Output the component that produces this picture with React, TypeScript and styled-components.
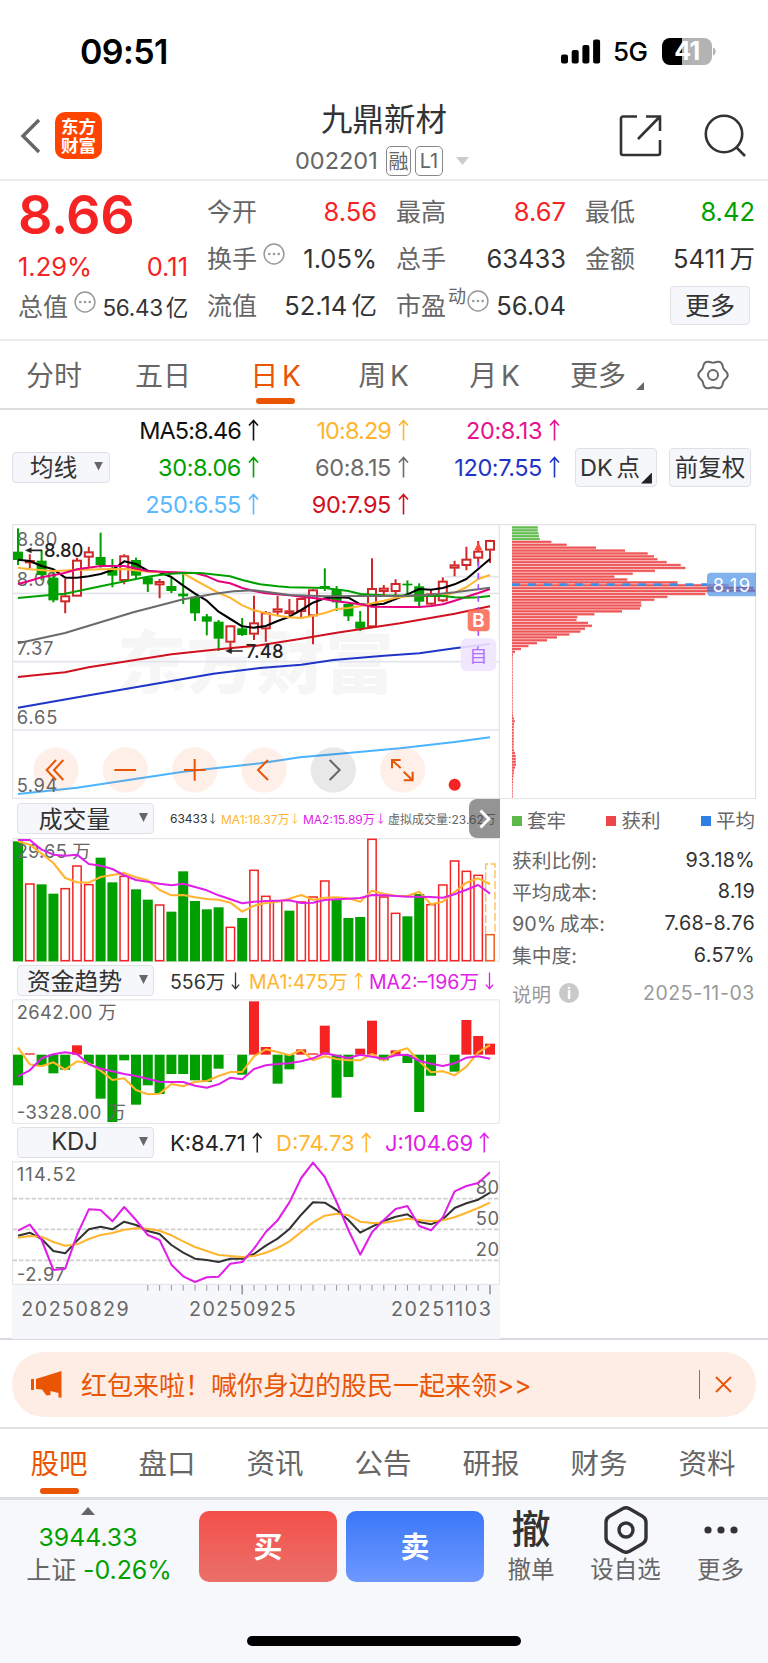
import styled, { createGlobalStyle } from "styled-components";

const FONT = `Inter, "Noto Sans CJK SC", sans-serif`;

const RED = "#f52323";
const GREEN = "#00a000";
const ORANGE = "#ea5504";
const YELLOW = "#ffb52e";
const PURPLE = "#e020e8";

// chart units are a third of a pixel
const candleX = (i: number) => 54 + 35.4 * i;

const toPath = (ys: number[]) =>
  ys.map((y, i) => `${candleX(i).toFixed(1)},${y}`).join(" ");

// six soft teeth around the settings icon
const gearPoints = Array.from({ length: 72 }, (_, i) => {
  const a = (i * 5 * Math.PI) / 180;
  const r = 13.5 + 1.2 * Math.cos(6 * a);
  return `${(16 + r * Math.cos(a)).toFixed(2)},${(16 + r * Math.sin(a)).toFixed(2)}`;
}).join(" ");

// [up, high, top, bottom, low]
const candles: [number, number, number, number, number][] = [
  [0, 40, 110, 135, 150],
  [1, 118, 136, 144, 160],
  [0, 105, 137, 180, 196],
  [0, 172, 188, 256, 262],
  [1, 192, 242, 261, 295],
  [1, 128, 135, 244, 244],
  [1, 95, 110, 127, 155],
  [0, 53, 126, 150, 158],
  [0, 132, 160, 182, 217],
  [1, 118, 122, 197, 208],
  [0, 128, 135, 182, 192],
  [0, 185, 187, 208, 231],
  [1, 192, 199, 210, 250],
  [0, 188, 213, 228, 234],
  [0, 177, 236, 244, 267],
  [0, 242, 245, 295, 318],
  [0, 297, 304, 320, 361],
  [0, 315, 320, 371, 408],
  [1, 331, 332, 382, 400],
  [0, 309, 340, 360, 363],
  [1, 242, 323, 358, 375],
  [1, 288, 293, 342, 380],
  [1, 242, 281, 292, 300],
  [1, 252, 287, 296, 302],
  [1, 248, 250, 290, 308],
  [1, 222, 224, 303, 388],
  [0, 160, 213, 222, 228],
  [0, 213, 222, 262, 288],
  [0, 265, 267, 304, 318],
  [0, 288, 320, 341, 348],
  [1, 130, 220, 336, 338],
  [1, 210, 219, 230, 240],
  [1, 193, 205, 230, 240],
  [0, 196, 206, 211, 236],
  [0, 205, 214, 260, 274],
  [1, 225, 236, 268, 270],
  [1, 187, 198, 258, 262],
  [1, 137, 149, 160, 184],
  [1, 95, 132, 152, 166],
  [1, 78, 108, 130, 150],
  [1, 74, 76, 106, 144],
];

const averages = [
  {
    color: "#4ab4ff",
    points:
      "54,837 231,818 400,793 550,770 780,745 900,727 1010,717 1200,700 1364,681 1470,667",
  },
  {
    color: "#1f35c8",
    points:
      "54,578 250,544 450,509 640,476 780,459 904,449 1000,435 1152,422 1258,415 1364,400 1470,387",
  },
  {
    color: "#d0111f",
    points:
      "54,486 89,482 195,472 266,457 372,440 515,418 656,403 780,391 904,371 1010,353 1200,325 1364,296 1470,274",
  },
  {
    color: "#000",
    points: toPath([
      134, 138, 153, 163, 188, 188, 184, 177, 165, 139, 147, 167, 172, 186, 212,
      236, 257, 290, 312, 334, 338, 333, 318, 305, 285, 263, 250, 247, 248, 268,
      270, 266, 252, 238, 222, 224, 219, 208, 192, 162, 132,
    ]),
  },
  {
    color: YELLOW,
    points:
      "54,158 89,163 160,168 231,165 302,163 372,162 443,170 500,172 550,175 585,195 621,215 656,234 690,248 727,271 762,286 797,294 833,302 868,307 904,309 939,302 975,294 1010,282 1045,279 1081,273 1116,265 1152,257 1187,248 1223,244 1258,243 1329,241 1364,233 1400,216 1435,192 1470,180",
  },
  {
    color: "#e6007e",
    points:
      "54,207 80,200 125,187 190,175 231,163 302,153 372,153 443,168 500,171 585,174 621,184 656,199 690,205 727,219 762,228 797,235 868,241 939,249 975,253 1010,259 1045,263 1081,268 1116,275 1200,276 1258,276 1294,273 1329,268 1364,257 1400,245 1435,234 1470,222",
  },
  {
    color: GREEN,
    points:
      "54,249 125,242 195,236 302,214 408,192 443,185 479,180 515,176 550,174 600,174 650,179 690,184 727,195 780,208 833,214 868,217 975,219 1045,228 1081,237 1150,241 1294,243 1329,243 1364,247 1400,248 1435,247 1470,243",
  },
  {
    color: "#6b6b6b",
    points:
      "54,385 195,354 400,292 550,253 640,237 700,229 762,226 797,230 868,240 975,244 1081,243 1200,243 1294,239 1364,232 1470,218",
  },
];

const volumes = [
  138, 265, 267, 295, 279, 211, 267, 187, 261, 242, 282, 313, 328, 349, 228, 317,
  342, 336, 395, 368, 224, 302, 317, 346, 319, 304, 256, 313, 368, 365, 131, 304,
  353, 363, 296, 327, 268, 196, 227, 239, 417,
];
const volumeDown = [
  0, 2, 3, 7, 8, 10, 11, 13, 14, 15, 16, 17, 19, 23, 27, 28, 29, 33, 34,
];
const volumeMa1 = [
  138, 148, 175, 203, 248, 261, 262, 245, 239, 233, 246, 255, 284, 300, 299, 306,
  311, 313, 322, 349, 331, 323, 319, 310, 299, 313, 307, 306, 309, 319, 286, 295,
  301, 302, 289, 327, 319, 290, 262, 249, 266,
];
const volumeMa2 = [
  134, 134, 163, 178, 181, 178, 206, 211, 221, 240, 254, 259, 265, 270, 265, 275,
  285, 300, 312, 324, 319, 317, 316, 315, 323, 322, 314, 312, 310, 308, 299, 300,
  302, 304, 304, 305, 307, 297, 283, 269, 295,
];

const funds = [
  870, 774, 810, 834, 823, 750, 806, 910, 980, 795, 928, 870, 896, 836, 836, 855,
  860, 820, 776, 838, 618, 755, 865, 822, 762, 774, 691, 907, 845, 760, 676, 795,
  765, 803, 950, 841, 776, 829, 674, 722, 745,
];
const fundMa1 = [
  757, 807, 813, 801, 823, 798, 804, 826, 854, 849, 884, 897, 895, 866, 873, 859,
  857, 842, 830, 830, 783, 762, 770, 780, 764, 795, 783, 791, 795, 795, 776, 796,
  769, 759, 797, 831, 828, 840, 814, 771, 749,
];
const fundMa2 = [
  843, 825, 789, 777, 771, 776, 807, 820, 828, 836, 842, 850, 859, 860, 860, 871,
  877, 867, 847, 852, 821, 810, 806, 804, 798, 789, 773, 781, 788, 778, 784, 790,
  780, 778, 797, 805, 812, 804, 787, 783, 790,
];

const kLine = [
  347, 338, 357, 393, 400, 362, 328, 320, 328, 305, 315, 333, 342, 375, 398, 416,
  420, 426, 416, 416, 402, 377, 356, 327, 284, 247, 248, 270, 300, 338, 320, 303,
  290, 283, 306, 313, 298, 264, 250, 239, 218,
];
const dLine = [
  353, 348, 350, 366, 377, 373, 357, 345, 339, 329, 325, 326, 332, 346, 364, 381,
  393, 405, 408, 411, 408, 398, 384, 364, 336, 307, 287, 281, 286, 305, 309, 308,
  303, 296, 300, 304, 301, 292, 278, 264, 248,
];
const jLine = [
  332, 314, 360, 450, 446, 345, 268, 270, 304, 261, 300, 345, 360, 434, 469, 486,
  472, 470, 431, 426, 386, 336, 301, 247, 174, 128, 171, 246, 330, 404, 337, 300,
  267, 258, 318, 331, 292, 214, 198, 189, 157,
];

const chips = [
  77, 77, 79, 81, 83, 118, 164, 252, 339, 407, 426, 436, 464, 506, 520, 429, 362,
  307, 346, 496, 650, 724, 729, 580, 466, 427, 387, 388, 384, 330, 247, 196, 193,
  228, 240, 219, 205, 172, 135, 105, 75, 49, 27, 9, 3, 2, 2, 2, 2, 2, 2, 2, 2, 2,
  2, 2, 2, 2, 2, 2, 2, 2, 2, 2, 2, 3, 6, 8, 6, 5, 5, 5, 5, 5, 5, 5, 4, 6, 9, 11,
  11, 11, 12, 9, 6, 5, 4, 3, 3, 2, 2, 2, 2, 2,
];

const maRows = [
  [
    { text: "MA5:8.46", color: "#111", tight: true },
    { text: "10:8.29", color: YELLOW, tight: true },
    { text: "20:8.13", color: "#e6148c" },
  ],
  [
    { text: "30:8.06", color: GREEN },
    { text: "60:8.15", color: "#6b6b6b" },
    { text: "120:7.55", color: "#1f35c8" },
  ],
  [
    { text: "250:6.55", color: "#5ab8ff" },
    { text: "90:7.95", color: "#d0111f" },
  ],
];

const stats = [
  ["获利比例:", "93.18%"],
  ["平均成本:", "8.19"],
  ["90% 成本:", "7.68-8.76"],
  ["集中度:", "6.57%"],
];

const bottomTabs = ["股吧", "盘口", "资讯", "公告", "研报", "财务", "资料"];

interface ArrowProps {
  down?: boolean;
  size?: number;
}

const Arrow = ({ down, size = 22 }: ArrowProps) => (
  <svg
    width={size / 2}
    height={size}
    viewBox="0 0 11 22"
    fill="none"
    stroke="currentColor"
    strokeWidth="1.6"
  >
    <path d={down ? "M5.5 0.5V21M1 15.5l4.5 5 4.5-5" : "M5.5 21.5V1M1 6.5l4.5-5 4.5 5"} />
  </svg>
);

const Dots = () => (
  <DotsIcon viewBox="0 0 22 22" fill="#999">
    <circle cx="11" cy="11" r="9.9" fill="none" stroke="#999" strokeWidth="1.5" />
    <circle cx="6.3" cy="11" r="1.3" />
    <circle cx="11" cy="11" r="1.3" />
    <circle cx="15.7" cy="11" r="1.3" />
  </DotsIcon>
);

interface LabelProps {
  x: number;
  y: number;
  width: number;
  children: string;
  color?: string;
  size?: number;
  weight?: number;
}

const Label = ({
  x,
  y,
  width,
  children,
  color = "#666",
  size = 55,
  weight = 400,
}: LabelProps) => (
  <text
    x={x}
    y={y}
    textLength={width}
    fill={color}
    fontSize={size}
    fontWeight={weight}
    fontFamily={FONT}
  >
    {children}
  </text>
);

const Line = ({ points, color }: { points: string; color: string }) => (
  <polyline points={points} fill="none" stroke={color} strokeWidth="6.2" strokeLinejoin="round" />
);

const CandleChart = () => (
  <svg width="500" height="275" viewBox="0 27 1500 825">
    <g fill="#f6f6f7" fontFamily={FONT} fontWeight="900" fontSize="206">
      <text x="352" y="520" textLength="830">
        东方财富
      </text>
    </g>
    <g stroke="#e3e5ec" strokeWidth="5">
      <path d="M38 235H1498M38 440H1498M38 645H1498M1335 185H1498" />
    </g>
    <path d="M38 28.5H1498M38 850H1498" stroke="#e3e3e5" strokeWidth="4" />
    <path d="M38 27V852M1498 27V852" stroke="#dfdfe3" strokeWidth="3" />
    <Label x={50} y={92} width={122}>8.80</Label>
    <Label x={50} y={213} width={122}>8.08</Label>
    <Label x={50} y={420} width={110}>7.37</Label>
    <Label x={50} y={626} width={122}>6.65</Label>
    {candles.map(([up, high, top, bottom, low], i) => {
      const x = candleX(i);
      return up ? (
        <g key={i} stroke="#d02828" strokeWidth="6" fill="#fff">
          <path d={`M${x} ${high}V${top}M${x} ${bottom}V${low}`} />
          <rect x={x - 12} y={top + 2} width="24" height={Math.max(bottom - top - 4, 2)} />
        </g>
      ) : (
        <g key={i} fill={GREEN}>
          <rect x={x - 3} y={high} width="6" height={low - high} />
          <rect x={x - 15} y={top} width="30" height={bottom - top} />
        </g>
      );
    })}
    {averages.map((item) => (
      <Line key={item.color} {...item} />
    ))}
    <g stroke="#222" strokeWidth="5" fill="#222">
      <path d="M84 106H126M686 408H728" />
      <path d="M76 106l18-8v16zM677 408l18-8v16z" strokeWidth="1" />
    </g>
    <Label x={132} y={125} width={118} color="#222" weight={500}>8.80</Label>
    <Label x={737} y={428} width={114} color="#222" weight={500}>7.48</Label>
    <path d="M1435 140V370" stroke="#a64dff" strokeWidth="5" strokeDasharray="18 16" />
    <path d="M1435 82l12 24h-24z" fill="#fb4a35" />
    <rect x="1403" y="283" width="66" height="66" rx="12" fill="#fb6a55" fillOpacity="0.88" />
    <Label x={1416} y={337} width={41} color="#fff" size={58} weight={600}>B</Label>
    <rect x="1382" y="370" width="107" height="98" rx="18" fill="#f0e4fe" fillOpacity="0.9" />
    <Label x={1408} y={441} width={54} color="#b070ff" size={54}>自</Label>
    {[168, 376, 584, 792, 1000, 1208].map((x) => (
      <circle key={x} cx={x} cy="765" r="68" fill={x === 1000 ? "#000" : "#fa6a1e"} fillOpacity={x === 1000 ? 0.09 : 0.1} />
    ))}
    <Label x={50} y={832} width={122}>5.94</Label>
    <g fill="none" stroke={ORANGE} strokeWidth="6">
      <path d="M168 735l-28 30 28 30M190 735l-28 30 28 30" />
      <path d="M343 765H408M552 765H617M584 732V797" />
      <path d="M804 735l-30 30 30 30" />
      <path d="M1176 760V735h26M1178 737l24 22M1238 770v26h-27M1236 794l-25-24" />
    </g>
    <path d="M989 735l30 30-30 30" fill="none" stroke="#666" strokeWidth="6" />
    <circle cx="1364" cy="809" r="18" fill={RED} />
  </svg>
);

const ChipChart = () => (
  <svg width="268" height="275" viewBox="0 27 804 825">
    {chips.map((width, i) => {
      const y = 33 + i * 8.68;
      const green = i < 5;
      return (
        <g key={i}>
          <rect x="36" y={y} width={width} height="8.68" fill={green ? "#b4deab" : "#f7b0b0"} />
          <rect x="36" y={y + 1.5} width={width} height="5.5" fill={green ? "#62bd50" : "#ee5557"} />
        </g>
      );
    })}
    <path d="M36 209H621" stroke="#3c8ce8" strokeWidth="8" strokeDasharray="24 23.3" />
    <path d="M0 28.5H767M0 851H767" stroke="#e3e3e5" strokeWidth="4" />
    <path d="M767 27V852" stroke="#dcdce4" strokeWidth="3" />
    <path d="M621 185a12 12 0 0 1 12-12H768V244H633a12 12 0 0 1-12-12z" fill="#5a9ae8" fillOpacity="0.76" />
    <path d="M621 218H760M621 226H765" stroke="#6a5ca0" strokeWidth="5" strokeOpacity="0.7" />
    <Label x={638} y={230} width={112} color="#fff">8.19</Label>
  </svg>
);

const VolumeChart = () => (
  <svg width="500" height="124" viewBox="0 128 1500 372">
    <path d="M38 130H1498V498H38z" fill="none" stroke="#e3e3e8" strokeWidth="3" />
    {volumes.map((y, i) => {
      const x = candleX(i);
      if (volumeDown.includes(i)) {
        return <rect key={i} x={x - 15} y={y} width="30" height={498 - y} fill={GREEN} />;
      }
      return (
        <rect
          key={i}
          x={x - 12.5}
          y={y + 1}
          width="25"
          height={495 - y}
          fill="#fff"
          stroke={i === 40 ? "#f05a1e" : RED}
          strokeWidth="4.5"
        />
      );
    })}
    <path d="M1457 415V206H1485V415" fill="none" stroke="#ffbe50" strokeWidth="4" strokeDasharray="24 8" />
    <Label x={50} y={187} width={222}>29.65 万</Label>
    <Line points={toPath(volumeMa1)} color={YELLOW} />
    <Line points={toPath(volumeMa2)} color={PURPLE} />
  </svg>
);

const FundChart = () => (
  <svg width="500" height="125" viewBox="0 611 1500 375">
    <path d="M38 613.5H1498V984H38z" fill="none" stroke="#e3e3e8" strokeWidth="3" />
    {funds.map((y, i) => (
      <rect
        key={i}
        x={candleX(i) - 15}
        y={Math.min(y, 778)}
        width="30"
        height={Math.abs(778 - y)}
        fill={y > 778 ? GREEN : y === 776 ? "#fbd5d5" : RED}
      />
    ))}
    <Label x={50} y={672} width={300}>2642.00 万</Label>
    <Label x={50} y={970} width={328}>-3328.00 万</Label>
    <Line points={toPath(fundMa1)} color={YELLOW} />
    <Line points={toPath(fundMa2)} color={PURPLE} />
  </svg>
);

const KdjChart = () => (
  <svg width="500" height="178" viewBox="0 123 1500 534">
    <rect x="36" y="493" width="1464" height="164" fill="#f6f7fa" />
    <path d="M38 125.5H1498V493H38z" fill="#fff" stroke="#e0e0e6" strokeWidth="3" />
    <path d="M38 236H1498M38 328H1498M38 421H1498" stroke="#cfcfcf" strokeWidth="5" strokeDasharray="13 6" />
    <Label x={50} y={184} width={178}>114.52</Label>
    <Label x={50} y={482} width={145}>-2.97</Label>
    <Label x={1427} y={222} width={70}>80</Label>
    <Label x={1427} y={315} width={70}>50</Label>
    <Label x={1427} y={408} width={70}>20</Label>
    <Line points={toPath(kLine)} color="#333" />
    <Line points={toPath(dLine)} color={YELLOW} />
    <Line points={toPath(jLine)} color={PURPLE} />
    {kLine.map((_, i) =>
      i < 11 ? null : (
        <path
          key={i}
          d={`M${candleX(i)} 495V${i === 19 || i === 40 ? 523 : 512}`}
          stroke="#999"
          strokeWidth={i === 19 || i === 40 ? 5 : 3}
        />
      ),
    )}
    <Label x={64} y={587} width={322} size={59}>20250829</Label>
    <Label x={567} y={587} width={320} size={59}>20250925</Label>
    <Label x={1173} y={587} width={300} size={59}>20251103</Label>
  </svg>
);

const App = () => {
  return (
    <Page>
      <GlobalStyle />
      <StatusBar>
        <Clock>09:51</Clock>
        <Signals>
          <svg width="40" height="25" viewBox="0 0 40 25">
            <rect x="0" y="15.5" width="7" height="9" rx="2" />
            <rect x="10.7" y="11" width="7" height="13.5" rx="2" />
            <rect x="21.4" y="6" width="7" height="18.5" rx="2" />
            <rect x="32.1" y="0.5" width="7" height="24" rx="2" />
          </svg>
          <Network>5G</Network>
          <Battery>41</Battery>
          <svg width="4" height="9" viewBox="0 0 4 9">
            <path d="M1 0.5c3.5 1 3.5 7 0 8z" fill="#b3b3b3" />
          </svg>
        </Signals>
      </StatusBar>

      <Header>
        <HeaderSide>
          <svg width="21" height="36" viewBox="0 0 21 36" fill="none" stroke="#666" strokeWidth="3.4">
            <path d="M19 2L3 18l16 16" />
          </svg>
          <Logo>
            <span>东方</span>
            <span>财富</span>
          </Logo>
        </HeaderSide>
        <HeaderTitle>
          <Name>九鼎新材</Name>
          <Code>
            <CodeText>002201</CodeText>
            <Badge $width={25}>融</Badge>
            <Badge $width={28}>L1</Badge>
            <Triangle $dir="down" $size={13} $color="#ccc" />
          </Code>
        </HeaderTitle>
        <HeaderSide $end>
          <svg width="43" height="43" viewBox="0 0 43 43" fill="none" stroke="#333" strokeWidth="2.6">
            <path d="M18 2.5H4a2 2 0 0 0-2 2V39a2 2 0 0 0 2 2H39a2 2 0 0 0 2-2V26M27 2.5H41V17M40 3.5L19 25" />
          </svg>
          <svg width="44" height="43" viewBox="0 0 44 43" fill="none" stroke="#333" strokeWidth="2.6">
            <circle cx="21" cy="20" r="18.2" />
            <path d="M33.5 33.5L42 42" />
          </svg>
        </HeaderSide>
      </Header>

      <Quote>
        <PriceBlock>
          <Price>8.66</Price>
          <Change>
            <span>1.29%</span>
            <span>0.11</span>
          </Change>
          <Cell>
            <CellName>
              总值
              <Dots />
            </CellName>
            <CellValue $small>56.43 亿</CellValue>
          </Cell>
        </PriceBlock>
        <QuoteGrid>
          <Cell>
            <CellName>今开</CellName>
            <CellValue $color={RED}>8.56</CellValue>
          </Cell>
          <Cell>
            <CellName>最高</CellName>
            <CellValue $color={RED}>8.67</CellValue>
          </Cell>
          <Cell>
            <CellName>最低</CellName>
            <CellValue $color={GREEN}>8.42</CellValue>
          </Cell>
          <Cell>
            <CellName>
              换手
              <Dots />
            </CellName>
            <CellValue>1.05%</CellValue>
          </Cell>
          <Cell>
            <CellName>总手</CellName>
            <CellValue>63433</CellValue>
          </Cell>
          <Cell>
            <CellName>金额</CellName>
            <CellValue>5411 万</CellValue>
          </Cell>
          <Cell>
            <CellName>流值</CellName>
            <CellValue>52.14 亿</CellValue>
          </Cell>
          <Cell>
            <CellName>
              市盈<Sup>动</Sup>
              <Dots />
            </CellName>
            <CellValue>56.04</CellValue>
          </Cell>
          <Cell $end>
            <MoreBtn>更多</MoreBtn>
          </Cell>
        </QuoteGrid>
      </Quote>

      <PeriodTabs>
        <Period>分时</Period>
        <Period>五日</Period>
        <Period $active>日 K</Period>
        <Period>周 K</Period>
        <Period>月 K</Period>
        <Period>
          更多
          <Corner $size={8} />
        </Period>
        <Period>
          <svg width="32" height="32" viewBox="0 0 32 32" fill="none" stroke="#666" strokeWidth="2">
            <polygon points={gearPoints} strokeLinejoin="round" />
            <circle cx="16" cy="16" r="5" />
          </svg>
        </Period>
      </PeriodTabs>

      <MaPanel>
        <MaSelect>
          均线
          <Triangle $dir="down" $size={9} $color="#666" />
        </MaSelect>
        <MaList>
          {maRows.flat().map(({ text, color, tight }) => (
            <MaItem key={text} $color={color} $tight={tight}>
              {text}
              <Arrow />
            </MaItem>
          ))}
        </MaList>
        <ToolBtn>
          DK 点
          <Corner $size={11} $dark />
        </ToolBtn>
        <ToolBtn>前复权</ToolBtn>
      </MaPanel>

      <Charts>
        <Left>
          <CandleChart />
          <IndicatorBar $height={39}>
            <IndicatorSelect>
              成交量
              <Triangle $dir="down" $size={9} $color="#666" />
            </IndicatorSelect>
            <Tiny $color="#333" $width={51}>
              63433
              <Arrow down size={11} />
            </Tiny>
            <Tiny $color={YELLOW} $width={82}>
              MA1:18.37万
              <Arrow down size={11} />
            </Tiny>
            <Tiny $color={PURPLE} $width={85}>
              MA2:15.89万
              <Arrow down size={11} />
            </Tiny>
            <Tiny $color="#666" $width={110}>
              虚拟成交量:23.62万
            </Tiny>
            <NextBtn>
              <svg width="12" height="20" viewBox="0 0 12 20" fill="none" stroke="#fff" strokeWidth="3">
                <path d="M1.5 1.5L10 10l-8.5 8.5" />
              </svg>
            </NextBtn>
          </IndicatorBar>
          <VolumeChart />
          <IndicatorBar $height={37}>
            <IndicatorSelect>
              资金趋势
              <Triangle $dir="down" $size={9} $color="#666" />
            </IndicatorSelect>
            <Reading $color="#333" $width={79} $size={19.5}>
              556万
              <Arrow down size={18} />
            </Reading>
            <Reading $color={YELLOW} $width={120} $size={19.5}>
              MA1:475万
              <Arrow size={18} />
            </Reading>
            <Reading $color={PURPLE} $width={125} $size={19.5}>
              MA2:–196万
              <Arrow down size={18} />
            </Reading>
          </IndicatorBar>
          <FundChart />
          <IndicatorBar $height={37}>
            <IndicatorSelect>
              KDJ
              <Triangle $dir="down" $size={9} $color="#666" />
            </IndicatorSelect>
            <Reading $color="#222" $width={106} $size={22}>
              K:84.71
              <Arrow size={21} />
            </Reading>
            <Reading $color={YELLOW} $width={109} $size={22}>
              D:74.73
              <Arrow size={21} />
            </Reading>
            <Reading $color={PURPLE} $width={110} $size={22}>
              J:104.69
              <Arrow size={21} />
            </Reading>
          </IndicatorBar>
          <KdjChart />
        </Left>
        <Right>
          <ChipChart />
          <Legend>
            <LegendItem $color="#5cb947">套牢</LegendItem>
            <LegendItem $color="#ec4648">获利</LegendItem>
            <LegendItem $color="#2f80e4">平均</LegendItem>
          </Legend>
          {stats.map(([name, value]) => (
            <Stat key={name}>
              <span>{name}</span>
              <StatValue>{value}</StatValue>
            </Stat>
          ))}
          <Note>
            <NoteName>
              说明
              <Info>i</Info>
            </NoteName>
            <NoteDate>2025-11-03</NoteDate>
          </Note>
        </Right>
      </Charts>

      <BannerWrap>
        <Banner>
          <svg width="31" height="27" viewBox="0 0 31 27" fill={ORANGE}>
            <path d="M0 8h3v11H0zM5 8L30.5 0v26.5h-3V22l-8-2v4l-4 .5-4.5-6L5 18z" />
          </svg>
          <BannerText>红包来啦！喊你身边的股民一起来领&gt;&gt;</BannerText>
          <BannerLine />
          <svg width="17" height="17" viewBox="0 0 17 17" stroke={ORANGE} strokeWidth="1.8">
            <path d="M1 1l15 15M16 1L1 16" />
          </svg>
        </Banner>
      </BannerWrap>

      <BottomTabs>
        {bottomTabs.map((name, i) => (
          <BottomTab key={name} $active={i === 0}>
            {name}
          </BottomTab>
        ))}
      </BottomTabs>

      <Footer>
        <IndexBlock>
          <IndexTop>
            <Triangle $dir="up" $size={14} $color="#666" />
            <IndexValue>3944.33</IndexValue>
          </IndexTop>
          <IndexRow>
            上证 <em>-0.26%</em>
          </IndexRow>
        </IndexBlock>
        <TradeBtn $from="#f4504a" $to="#ea706a">
          买
        </TradeBtn>
        <TradeBtn $from="#3a78f8" $to="#6e98ff">
          卖
        </TradeBtn>
        <Action $width={76}>
          <BigChar>撤</BigChar>
          撤单
        </Action>
        <Action $width={113}>
          <svg width="44" height="48" viewBox="0 0 44 48" fill="none" stroke="#333" strokeWidth="3.4">
            <path d="M18.5 2.8a7 7 0 0 1 7 0l13 7.5a7 7 0 0 1 3.5 6v15.5a7 7 0 0 1-3.5 6l-13 7.5a7 7 0 0 1-7 0l-13-7.5a7 7 0 0 1-3.500-6V16.300a7 7 0 0 1 3.500-6z" />
            <circle cx="22" cy="24" r="7" />
          </svg>
          设自选
        </Action>
        <Action $width={77}>
          <svg width="34" height="48" viewBox="0 0 34 48" fill="#333">
            <circle cx="4" cy="24" r="3.6" />
            <circle cx="17" cy="24" r="3.6" />
            <circle cx="30" cy="24" r="3.6" />
          </svg>
          更多
        </Action>
      </Footer>
      <HomeArea>
        <HomeBar />
      </HomeArea>
    </Page>
  );
};

export default App;

const GlobalStyle = createGlobalStyle`
  * {
    box-sizing: border-box;
  }

  body {
    margin: 0;
    background: #fff;
  }

  svg {
    display: block;
    flex-shrink: 0;
  }
`;

const Page = styled.div`
  display: flex;
  flex-direction: column;

  width: 768px;
  height: 1663px;
  overflow: hidden;

  background-color: #fff;

  font-family: ${FONT};
  color: #333;
  white-space: nowrap;
`;

const StatusBar = styled.div`
  display: flex;
  align-items: center;
  justify-content: space-between;

  height: 92px;
  padding: 10px 52px 0 80px;
`;

const Clock = styled.div`
  font-size: 34px;
  font-weight: 600;
  letter-spacing: -0.6px;
  color: #000;
`;

const Signals = styled.div`
  display: flex;
  align-items: center;
`;

const Network = styled.div`
  width: 61px;
  padding-left: 12px;

  font-size: 26px;
  font-weight: 500;
  letter-spacing: -0.5px;
  color: #000;
`;

const Battery = styled.div`
  display: flex;
  align-items: center;
  justify-content: center;

  width: 50px;
  height: 27px;
  border-radius: 8px;

  background: linear-gradient(to right, #000 41%, #b3b3b3 41%);

  color: #fff;
  font-size: 25px;
  font-weight: 700;
  letter-spacing: -0.5px;
`;

const Header = styled.div`
  display: grid;
  grid-template-columns: 200px 1fr 200px;

  height: 89px;
  border-bottom: 2px solid #ececec;
`;

const HeaderSide = styled.div<{ $end?: boolean }>`
  display: flex;
  align-items: center;
  justify-content: ${({ $end }) => ($end ? "flex-end" : "flex-start")};
  gap: ${({ $end }) => ($end ? 41 : 14)}px;

  padding: 0 21px 0 20px;
`;

const Logo = styled.div`
  display: flex;
  flex-direction: column;
  align-items: center;
  justify-content: center;

  width: 47px;
  height: 47px;
  border-radius: 10px;

  background-color: #ff4400;

  color: #fff;
  font-size: 17.5px;
  font-weight: 700;
  line-height: 19px;
`;

const HeaderTitle = styled.div`
  display: flex;
  flex-direction: column;
  align-items: center;

  padding-top: 8px;
`;

const Name = styled.div`
  font-size: 31.5px;
  line-height: 40px;
`;

const Code = styled.div`
  display: flex;
  align-items: center;

  margin: 6px 0 0 -4px;
`;

const CodeText = styled.div`
  width: 91px;

  color: #666;
  font-size: 23.5px;
  line-height: 30px;
`;

const Badge = styled.div<{ $width: number }>`
  display: flex;
  align-items: center;
  justify-content: center;

  width: ${({ $width }) => $width}px;
  height: 30px;
  margin-right: 4px;
  padding-bottom: 1px;

  border: 1.5px solid #888;
  border-radius: 5px;

  color: #666;
  font-size: 20px;
`;

const Triangle = styled.div<{
  $dir: "up" | "down";
  $size: number;
  $color: string;
}>`
  width: ${({ $size }) => $size}px;
  height: ${({ $size }) => ($size > 10 ? 8 : 9)}px;
  margin-left: ${({ $size }) => ($size === 13 ? 9 : 0)}px;

  background-color: ${({ $color }) => $color};
  clip-path: ${({ $dir }) =>
    $dir === "up"
      ? "polygon(50% 0, 100% 100%, 0 100%)"
      : "polygon(0 0, 100% 0, 50% 100%)"};
`;

const Quote = styled.div`
  display: flex;

  height: 160px;
  padding: 0 13px 0 18px;

  border-bottom: 2px solid #ececec;
`;

const PriceBlock = styled.div`
  width: 170px;
  margin-right: 19px;
`;

const Price = styled.div`
  height: 67px;
  padding-top: 2px;

  color: ${RED};
  font-size: 54px;
  font-weight: 600;
  line-height: 64px;
  letter-spacing: -0.5px;
`;

const Change = styled.div`
  display: flex;
  align-items: center;
  justify-content: space-between;

  height: 35px;
  padding-top: 2px;

  color: ${RED};
  font-size: 25.5px;
`;

const QuoteGrid = styled.div`
  display: grid;
  grid-template-columns: repeat(3, 170px);
  grid-auto-rows: 47px;
  column-gap: 19px;

  padding-top: 7px;
`;

const Cell = styled.div<{ $end?: boolean }>`
  display: flex;
  align-items: center;
  justify-content: ${({ $end }) => ($end ? "flex-end" : "space-between")};

  height: 47px;
  padding-right: ${({ $end }) => ($end ? 5 : 0)}px;
`;

const CellName = styled.div`
  display: flex;
  align-items: center;

  padding-bottom: 4px;

  color: #666;
  font-size: 25px;
`;

const CellValue = styled.div<{ $color?: string; $small?: boolean }>`
  padding-top: ${({ $small }) => ($small ? 2 : 0)}px;

  color: ${({ $color }) => $color || "#333"};
  font-size: ${({ $small }) => ($small ? 22.5 : 25.5)}px;
  letter-spacing: ${({ $small }) => ($small ? -0.3 : 0)}px;
  line-height: 30px;
  word-spacing: -3px;
`;

const DotsIcon = styled.svg`
  width: 22px;
  height: 22px;
  margin: 0 0 6px 6px;

  sup + & {
    margin-left: 1px;
  }
`;

const Sup = styled.sup`
  align-self: flex-start;

  margin-left: 2px;

  font-size: 18px;
  line-height: 22px;
`;

const MoreBtn = styled.div`
  display: flex;
  align-items: center;
  justify-content: center;

  width: 80px;
  height: 39px;
  padding-bottom: 4px;

  background-color: #f6f7fa;
  border: 1.5px solid #dfe1e6;
  border-radius: 4px;

  font-size: 25px;
`;

const PeriodTabs = styled.div`
  display: grid;
  grid-template-columns: 108px 110px 115px 101px 121px 86px 127px;

  height: 69px;
  border-bottom: 2px solid #dedede;
`;

const Period = styled.div<{ $active?: boolean }>`
  display: flex;
  align-items: center;
  justify-content: center;

  position: relative;
  padding-bottom: 2px;

  color: ${({ $active }) => ($active ? ORANGE : "#666")};
  font-size: 28px;
  word-spacing: -4px;

  &:last-child {
    padding-left: 17px;
    padding-bottom: 0;
  }

  &::after {
    content: "";
    display: ${({ $active }) => ($active ? "block" : "none")};

    position: absolute;
    bottom: 4px;
    width: 39px;
    height: 6px;
    border-radius: 3px;

    background-color: ${ORANGE};
  }
`;

const Corner = styled.div<{ $size: number; $dark?: boolean }>`
  align-self: flex-end;

  width: ${({ $size }) => $size}px;
  height: ${({ $size }) => $size}px;
  margin: ${({ $dark }) => ($dark ? "0 0 -1px 1px" : "0 -18px 16px 10px")};

  background-color: ${({ $dark }) => ($dark ? "#222" : "#666")};
  clip-path: polygon(100% 0, 100% 100%, 0 100%);
`;

const MaPanel = styled.div`
  display: flex;
  align-items: center;

  height: 114px;
  padding: 0 12px;
`;

const MaSelect = styled.div`
  display: flex;
  align-items: center;
  justify-content: space-between;

  width: 98px;
  height: 31px;
  padding: 0 6px 2px 17px;

  background-color: #f6f7fa;
  border: 1.5px solid #dfe1e6;
  border-radius: 4px;

  font-size: 23.5px;
  letter-spacing: 0.3px;
`;

const MaList = styled.div`
  display: grid;
  grid-template-columns: 149px 150px 151px;
  grid-auto-rows: 37px;

  margin-right: 15px;
`;

const MaItem = styled.div<{ $color: string; $tight?: boolean }>`
  display: flex;
  align-items: center;
  justify-content: flex-end;
  gap: 7px;

  color: ${({ $color }) => $color};
  font-size: 23.5px;
  letter-spacing: ${({ $tight }) => ($tight ? -0.9 : -0.4)}px;
`;

const ToolBtn = styled.div`
  display: flex;
  align-items: center;
  justify-content: center;

  width: 82px;
  height: 39px;
  margin-right: 12px;
  padding-bottom: 3px;

  background-color: #f6f7fa;
  border: 1.5px solid #dfe1e6;
  border-radius: 4px;

  font-size: 23.5px;
  word-spacing: -3px;

  &:last-child {
    margin-right: 0;
  }
`;

const Charts = styled.div`
  display: flex;

  height: 816px;
  border-bottom: 2px solid #d9dae0;
`;

const Left = styled.div`
  width: 500px;
`;

const IndicatorBar = styled.div<{ $height: number }>`
  display: flex;
  align-items: center;

  position: relative;
  height: ${({ $height }) => $height}px;
  padding-left: 17px;
`;

const IndicatorSelect = styled.div`
  display: flex;
  align-items: center;
  justify-content: center;

  position: relative;
  flex-shrink: 0;
  width: 137px;
  height: 31px;
  margin-right: 16px;
  padding: 0 22px 2px 0;

  background-color: #f6f7fa;
  border: 1.5px solid #dfe1e6;
  border-radius: 4px;

  font-size: 23.8px;

  ${Triangle} {
    position: absolute;
    right: 5px;
  }
`;

const Tiny = styled.div<{ $color: string; $width: number }>`
  display: flex;
  align-items: center;
  gap: 3px;

  flex-shrink: 0;
  width: ${({ $width }) => $width}px;

  color: ${({ $color }) => $color};
  font-size: 12px;
`;

const NextBtn = styled.div`
  display: flex;
  align-items: center;
  justify-content: center;

  position: absolute;
  right: 0;
  top: 0;
  width: 31px;
  height: 39px;
  border-radius: 8px 0 0 8px;

  background-color: rgba(70, 70, 70, 0.58);
`;

const Reading = styled.div<{ $color: string; $width: number; $size: number }>`
  display: flex;
  align-items: center;
  gap: 6px;

  flex-shrink: 0;
  width: ${({ $width }) => $width}px;

  color: ${({ $color }) => $color};
  font-size: ${({ $size }) => $size}px;
`;

const Right = styled.div`
  width: 268px;
`;

const Legend = styled.div`
  display: flex;
  align-items: center;
  justify-content: space-between;

  height: 45px;
  padding: 0 13px 1px 12px;
`;

const LegendItem = styled.div<{ $color: string }>`
  display: flex;
  align-items: center;
  gap: 5px;

  color: #666;
  font-size: 19.5px;
  line-height: 24px;

  &::before {
    content: "";
    width: 10px;
    height: 10px;
    background-color: ${({ $color }) => $color};
  }
`;

const Stat = styled.div`
  display: flex;
  align-items: center;
  justify-content: space-between;

  height: 31.6px;
  padding: 0 13px 0 12px;

  color: #666;
  font-size: 19.8px;
  word-spacing: -2px;
`;

const StatValue = styled.span`
  color: #333;
  letter-spacing: 0.3px;
`;

const Note = styled.div`
  display: flex;
  align-items: center;
  justify-content: space-between;

  height: 46px;
  padding: 0 13px 0 12px;

  color: #999;
  font-size: 19.5px;
`;

const NoteName = styled.div`
  display: flex;
  align-items: center;
  gap: 8px;
`;

const NoteDate = styled.div`
  letter-spacing: 0.6px;
`;

const Info = styled.div`
  display: flex;
  align-items: center;
  justify-content: center;

  width: 20px;
  height: 20px;
  border-radius: 50%;

  background-color: #c9c9c9;

  color: #fff;
  font-size: 15px;
  font-weight: 700;
`;

const BannerWrap = styled.div`
  height: 89px;
  padding: 12px 12px 0;

  border-bottom: 2px solid #e2e2e4;
`;

const Banner = styled.div`
  display: flex;
  align-items: center;

  height: 65px;
  padding: 0 24px 0 19px;
  border-radius: 32px;

  background-color: #fdede5;
`;

const BannerText = styled.div`
  flex: 1;
  margin-left: 19px;
  padding-bottom: 3px;

  color: ${ORANGE};
  font-size: 26px;
`;

const BannerLine = styled.div`
  width: 1.5px;
  height: 29px;
  margin-right: 15px;

  background-color: ${ORANGE};
`;

const BottomTabs = styled.div`
  display: grid;
  grid-template-columns: repeat(7, 108px);
  justify-content: center;

  height: 71px;
  padding-right: 2px;
  border-bottom: 3px solid #dcdde2;
`;

const BottomTab = styled.div<{ $active: boolean }>`
  display: flex;
  align-items: center;
  justify-content: center;

  position: relative;
  padding-bottom: 4px;

  color: ${({ $active }) => ($active ? ORANGE : "#666")};
  font-size: 28.5px;

  &::after {
    content: "";
    display: ${({ $active }) => ($active ? "block" : "none")};

    position: absolute;
    bottom: 3px;
    width: 39px;
    height: 6px;
    border-radius: 3px;

    background-color: ${ORANGE};
  }
`;

const Footer = styled.div`
  display: flex;

  height: 100px;
  padding-left: 21px;

  background-color: #f7f8fb;
`;

const IndexBlock = styled.div`
  display: flex;
  flex-direction: column;
  align-items: center;

  width: 156px;
  margin-right: 22px;
  padding-top: 7px;
`;

const IndexTop = styled.div`
  display: flex;
  flex-direction: column;
  align-items: center;

  margin-right: 22px;
`;

const IndexValue = styled.div`
  height: 34px;
  margin: 5px 0 0;

  color: ${GREEN};
  font-size: 24.8px;
  line-height: 34px;
`;

const IndexRow = styled.div`
  color: #666;
  font-size: 25px;
  line-height: 32px;
  letter-spacing: -0.1px;

  em {
    color: ${GREEN};
    font-style: normal;
  }
`;

const TradeBtn = styled.div<{ $from: string; $to: string }>`
  display: flex;
  align-items: center;
  justify-content: center;

  width: 138px;
  height: 71px;
  margin: 11px 9px 0 0;
  padding-bottom: 3px;
  border-radius: 10px;

  background: linear-gradient(
    to bottom,
    ${({ $from }) => $from},
    ${({ $to }) => $to}
  );

  color: #fff;
  font-size: 29px;
  font-weight: 700;
`;

const Action = styled.div<{ $width: number }>`
  display: flex;
  flex-direction: column;
  align-items: center;

  width: ${({ $width }) => $width}px;
  padding-top: 6px;

  color: #666;
  font-size: 23.5px;
  line-height: 32px;
`;

const BigChar = styled.div`
  height: 48px;

  color: #333;
  font-size: 39px;
  font-weight: 500;
  line-height: 46px;
`;

const HomeArea = styled.div`
  display: flex;
  justify-content: center;

  flex: 1;
  padding-top: 36px;

  background-color: #f7f8fb;
`;

const HomeBar = styled.div`
  width: 274px;
  height: 10px;
  border-radius: 5px;

  background-color: #000;
`;
